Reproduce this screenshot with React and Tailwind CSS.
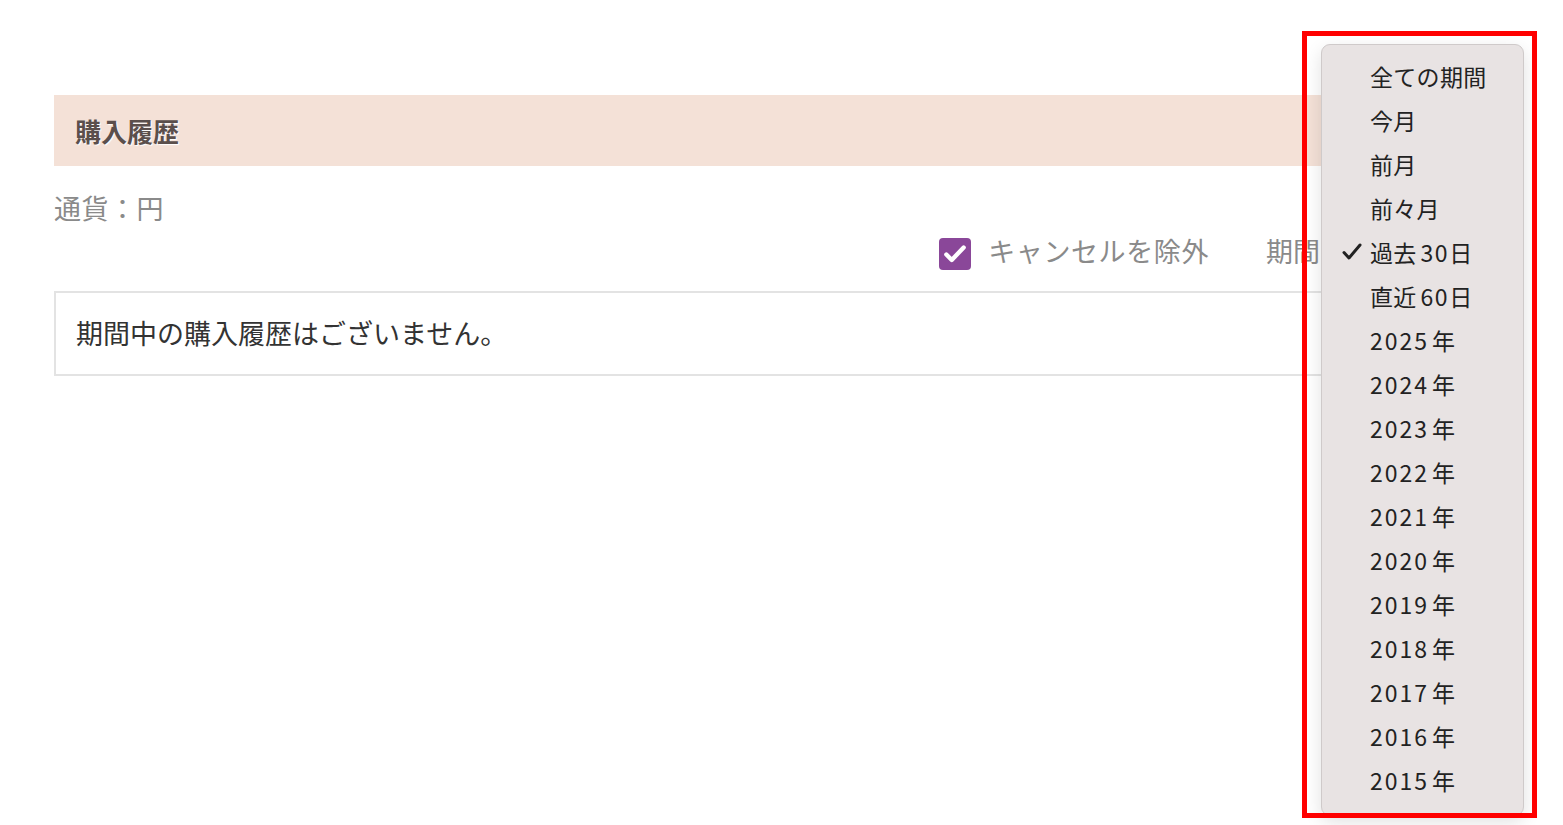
import React from 'react';

const periods = [
  '全ての期間',
  '今月',
  '前月',
  '前々月',
  '過去30日',
  '直近60日',
  '2025年',
  '2024年',
  '2023年',
  '2022年',
  '2021年',
  '2020年',
  '2019年',
  '2018年',
  '2017年',
  '2016年',
  '2015年',
];

const font = { fontFamily: '"Noto Sans CJK JP", "Noto Sans", sans-serif' };

// digits in the reference font run wider, with a little air next to the kanji
const Label = ({ text }) =>
  text
    .split(/(\d+)/)
    .filter(Boolean)
    .map((part, i) =>
      /^\d+$/.test(part) ? (
        <span key={i} className={i === 0 ? 'mr-[3px] tracking-[2px]' : 'ml-[4px] tracking-[1.5px]'}>
          {part}
        </span>
      ) : (
        <span key={i}>{part}</span>
      )
    );

const CheckBox = () => (
  <span className="flex h-[32px] w-[32px] items-center justify-center rounded-[4px] bg-[#8a4799]">
    <svg width="26" height="26" viewBox="0 0 24 24" fill="none">
      <path d="M4 12.5l5 5L20 6" stroke="#fff" strokeWidth="4" strokeLinecap="round" strokeLinejoin="round" />
    </svg>
  </span>
);

const PeriodMenu = () => (
  <div className="absolute left-[1321px] top-[44px] w-[203px] h-[772px] rounded-[9px] border border-[#cfcaca] bg-[#e8e3e3] pt-[9px] shadow-[0_6px_18px_rgba(0,0,0,0.12)]">
    {periods.map((p) => (
      <div key={p} className="flex h-[44px] items-center pl-[20px] text-[23px] text-[#222] tracking-[0.3px]">
        <span className="flex w-[28px] items-center">
          {p === '過去30日' && (
            <svg width="20" height="18" viewBox="0 0 20 18" fill="none">
              <path d="M2 9.5l5 5.5L18 2" stroke="#222" strokeWidth="3" strokeLinecap="round" strokeLinejoin="round" />
            </svg>
          )}
        </span>
        <Label text={p} />
      </div>
    ))}
  </div>
);

export default function App() {
  return (
    <div className="relative h-[825px] w-[1563px] overflow-hidden bg-white" style={font}>
      <div className="px-[54px] pt-[95px]">
        <div className="flex h-[71px] items-center bg-[#f4e1d7] pl-[21px]">
          <h2 className="text-[26px] font-semibold text-[#5b4f4c] [text-shadow:1px_1px_1px_#fff]">購入履歴</h2>
        </div>
        <p className="mt-[22px] text-[27px] leading-[40px] tracking-[0.5px] text-[#8a8a8a]">通貨：円</p>
        <div className="mt-[3px] flex items-center justify-end">
          <label className="flex items-center gap-[17px]">
            <CheckBox />
            <span className="pb-[6px] text-[27px] leading-[40px] tracking-[0.6px] text-[#8a8a8a]">キャンセルを除外</span>
          </label>
          <span className="ml-[57px] pb-[6px] text-[27px] leading-[40px] text-[#8a8a8a]">期間</span>
          <div className="ml-[2px] h-[40px] w-[187px] rounded border border-[#ccc]" />
        </div>
        <div className="mt-[14px] flex h-[85px] items-center border-2 border-[#e3e3e3] pl-[20px]">
          <p className="text-[27px] text-[#333]">期間中の購入履歴はございません。</p>
        </div>
      </div>

      <PeriodMenu />
      <div className="pointer-events-none absolute left-[1302px] top-[31px] h-[787px] w-[235px] border-[5px] border-[#ff0000]" />
    </div>
  );
}
